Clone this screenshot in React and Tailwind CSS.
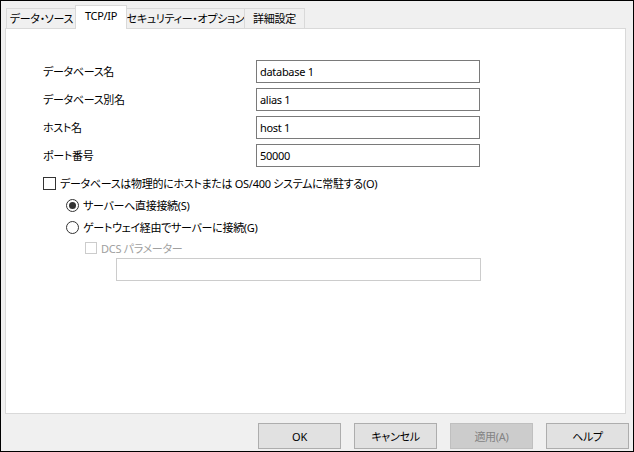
const font = { fontFamily: '"Noto Sans", "Noto Sans CJK JP", sans-serif' };

const fields = [
  { label: 'データベース名', value: 'database 1' },
  { label: 'データベース別名', value: 'alias 1' },
  { label: 'ホスト名', value: 'host 1' },
  { label: 'ポート番号', value: '50000' },
];

const tabs = ['データ・ソース', 'TCP/IP', 'セキュリティー・オプション', '詳細設定'];

const Tab = ({ text, active, className }) =>
  active ? (
    <div className={`relative z-10 -mb-[1px] h-[24px] bg-white border border-b-0 border-[#d9d9d9] flex items-start justify-center pt-[4px] whitespace-nowrap ${className}`}>
      {text}
    </div>
  ) : (
    <div className={`h-[20px] bg-[#f0f0f0] border border-b-0 border-[#d9d9d9] flex items-center justify-center whitespace-nowrap ${className}`}>
      {text}
    </div>
  );

const Radio = ({ checked, label }) => (
  <div className="flex items-center h-[22px] pl-[60px]">
    <span className="w-[13px] h-[13px] rounded-full border border-[#333] bg-white flex items-center justify-center">
      {checked && <span className="w-[7px] h-[7px] rounded-full bg-[#333]" />}
    </span>
    <span className="ml-[4px]">{label}</span>
  </div>
);

export default function App() {
  return (
    <div
      className="w-[634px] h-[452px] box-border border border-black bg-[#f0f0f0] text-[11px] tracking-[-0.3px] text-black flex flex-col [font-feature-settings:'palt'] leading-none"
      style={font}
    >
      {/* tabs */}
      <div className="flex items-end pl-[5px] pt-[4px] h-[27px]">
        <Tab text={tabs[0]} className="w-[71px]" />
        <Tab text={tabs[1]} active className="w-[52px] -ml-[2px]" />
        <Tab text={tabs[2]} className="w-[119px] -ml-[1px]" />
        <Tab text={tabs[3]} className="w-[61px] -ml-[1px]" />
      </div>

      {/* panel */}
      <div className="ml-[4px] w-[621px] h-[386px] bg-white border border-[#d9d9d9] pt-[28px]">
        {fields.map((f) => (
          <div key={f.label} className="flex items-center h-[28px]">
            <span className="w-[250px] pl-[37px]">{f.label}</span>
            <div className="w-[224px] h-[23px] border border-[#7a7a7a] flex items-center px-[3px]">{f.value}</div>
          </div>
        ))}

        <div className="flex items-center h-[22px] mt-[3px] pl-[37px]">
          <span className="w-[13px] h-[13px] border border-[#333] bg-white" />
          <span className="ml-[4px]">データベースは物理的にホストまたは OS/400 システムに常駐する(O)</span>
        </div>
        <Radio checked label="サーバーへ直接接続(S)" />
        <Radio label="ゲートウェイ経由でサーバーに接続(G)" />
        <div className="flex items-center h-[20px] pl-[79px] text-[#a0a0a0]">
          <span className="w-[12px] h-[12px] border border-[#cccccc] bg-white" />
          <span className="ml-[4px]">DCS パラメーター</span>
        </div>
        <div className="ml-[110px] w-[365px] h-[23px] border border-[#cccccc] bg-white" />
      </div>

      {/* buttons */}
      <div className="flex justify-end gap-[13px] pr-[4px] mt-[9px]">
        {['OK', 'キャンセル', '適用(A)', 'ヘルプ'].map((b) => {
          const disabled = b === '適用(A)';
          return (
            <div
              key={b}
              className={`w-[83px] h-[26px] flex items-center justify-center border ${
                disabled ? 'bg-[#cccccc] border-[#bfbfbf] text-[#838383]' : 'bg-[#e1e1e1] border-[#adadad]'
              }`}
            >
              {b}
            </div>
          );
        })}
      </div>
    </div>
  );
}
